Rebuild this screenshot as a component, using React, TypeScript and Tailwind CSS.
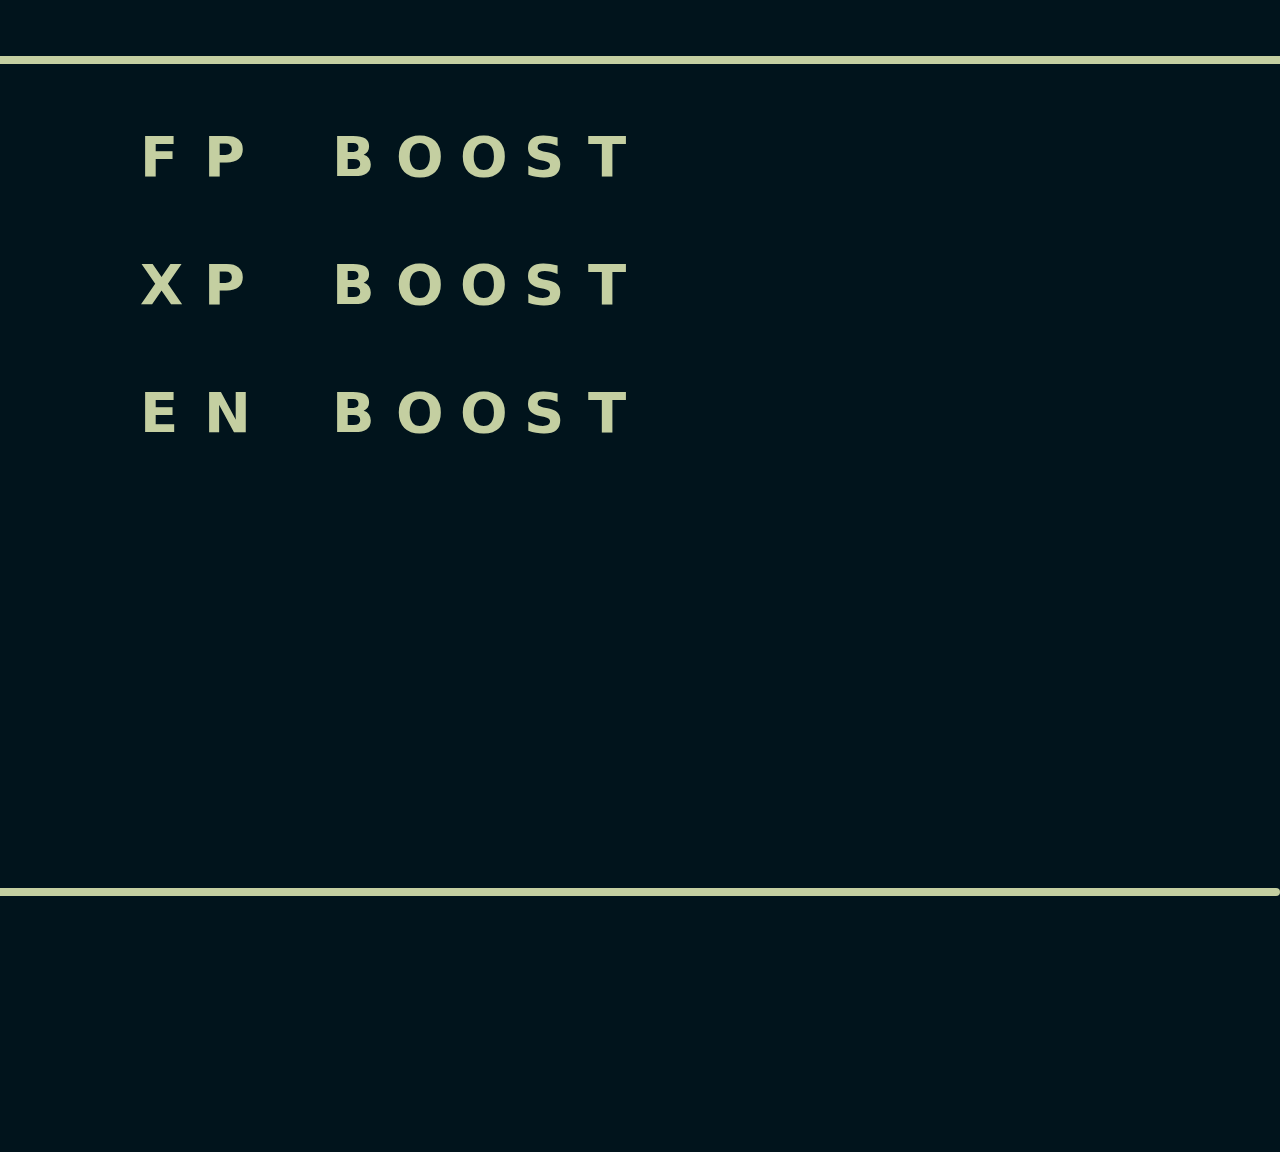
import React from "react";

const rows = ["FP BOOST", "XP BOOST", "EN BOOST"];

function Label({ text }: { text: string }) {
  return (
    <div className="flex h-[40px] leading-[40px] text-[56px] font-bold text-[#c4cfa1] font-['DejaVu_Sans',sans-serif]">
      {text.split("").map((c, i) => (
        <span key={i} className="inline-block w-[64px] whitespace-pre">
          {c}
        </span>
      ))}
    </div>
  );
}

export default function App() {
  return (
    <div className="w-[1280px] h-[1152px] bg-[#01141c] overflow-hidden pt-[56px]">
      <div className="h-[8px] w-full bg-[#c4cfa1]" />
      <div className="flex flex-col gap-[88px] pl-[140px] pt-[73px] h-[824px]">
        {rows.map((r) => (
          <Label key={r} text={r} />
        ))}
      </div>
      <div className="h-[8px] w-full bg-[#c4cfa1] rounded-r-full" />
    </div>
  );
}
